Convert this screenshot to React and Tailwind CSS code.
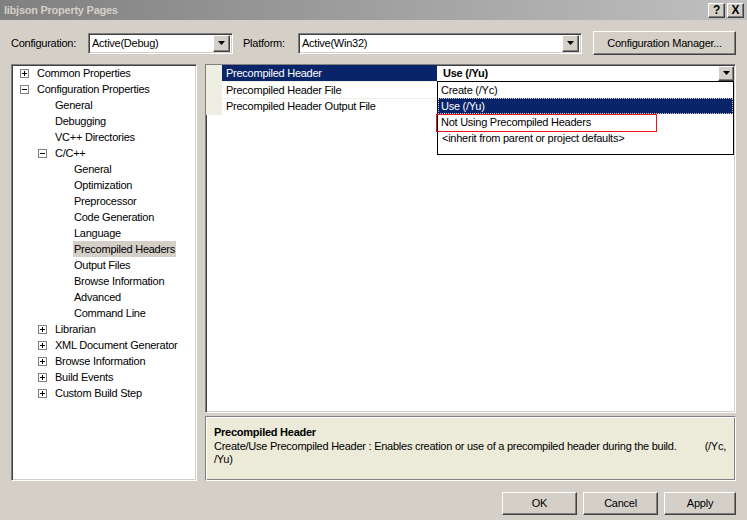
import React from 'react';

const treeItems = [
  { label: 'Common Properties', level: 0, box: 'plus' },
  { label: 'Configuration Properties', level: 0, box: 'minus' },
  { label: 'General', level: 1 },
  { label: 'Debugging', level: 1 },
  { label: 'VC++ Directories', level: 1 },
  { label: 'C/C++', level: 1, box: 'minus' },
  { label: 'General', level: 2 },
  { label: 'Optimization', level: 2 },
  { label: 'Preprocessor', level: 2 },
  { label: 'Code Generation', level: 2 },
  { label: 'Language', level: 2 },
  { label: 'Precompiled Headers', level: 2, selected: true },
  { label: 'Output Files', level: 2 },
  { label: 'Browse Information', level: 2 },
  { label: 'Advanced', level: 2 },
  { label: 'Command Line', level: 2 },
  { label: 'Librarian', level: 1, box: 'plus' },
  { label: 'XML Document Generator', level: 1, box: 'plus' },
  { label: 'Browse Information', level: 1, box: 'plus' },
  { label: 'Build Events', level: 1, box: 'plus' },
  { label: 'Custom Build Step', level: 1, box: 'plus' },
];

const indent = ['pl-[8px]', 'pl-[26px]', 'pl-[45px]'];

const raised =
  'border border-t-white border-l-white border-b-[#404040] border-r-[#404040] shadow-[inset_-1px_-1px_0_#808080,inset_1px_1px_0_#d4d0c8] bg-[#d4d0c8]';
const sunken =
  'border border-t-[#808080] border-l-[#808080] border-b-white border-r-white shadow-[inset_1px_1px_0_#404040,inset_-1px_-1px_0_#d4d0c8]';

const ExpandBox = ({ type }) => (
  <svg width="9" height="9" viewBox="0 0 9 9" className="block">
    <rect x="0.5" y="0.5" width="8" height="8" fill="#fff" stroke="#808080" />
    <line x1="2" y1="4.5" x2="7" y2="4.5" stroke="#000" />
    {type === 'plus' && <line x1="4.5" y1="2" x2="4.5" y2="7" stroke="#000" />}
  </svg>
);

const Arrow = () => (
  <svg width="7" height="4" viewBox="0 0 7 4" className="block">
    <path d="M0 0h7L3.5 4z" fill="#000" />
  </svg>
);

const Combo = ({ value, className }) => (
  <div className={`${sunken} ${className} h-[21px] bg-white flex items-center`}>
    <span className="flex-1 pl-[3px] text-black">{value}</span>
    <div className={`${raised} w-[17px] h-[17px] mr-[2px] flex items-center justify-center`}>
      <Arrow />
    </div>
  </div>
);

const Button = ({ children, className }) => (
  <div className={`${raised} ${className} flex items-center justify-center text-black`}>{children}</div>
);

export default function App() {
  return (
    <div className="w-[747px] h-[520px] bg-[#d4d0c8] flex flex-col overflow-hidden font-['Liberation_Sans',Arial,sans-serif] text-[11px] tracking-[-0.25px] text-black select-none">
      {/* Title bar */}
      <div className="h-[20px] bg-gradient-to-r from-[#808080] to-[#c0c0c0] flex items-center pl-[4px] pr-[3px]">
        <span className="flex-1 font-bold text-[#d4d0c8]">libjson Property Pages</span>
        <Button className="w-[17px] h-[15px] font-bold text-[12px]">?</Button>
        <Button className="w-[17px] h-[15px] ml-[2px] font-bold text-[12px]">X</Button>
      </div>

      {/* Configuration row */}
      <div className="mt-[11px] h-[24px] flex items-center px-[11px]">
        <span className="w-[77px]">Configuration:</span>
        <Combo value="Active(Debug)" className="w-[145px]" />
        <span className="ml-[10px] w-[55px]">Platform:</span>
        <Combo value="Active(Win32)" className="w-[284px]" />
        <Button className="ml-[11px] w-[143px] h-[24px]">Configuration Manager...</Button>
      </div>

      {/* Main area */}
      <div className="mt-[9px] h-[417px] flex px-[11px] gap-[8px]">
        {/* Tree */}
        <div className={`${sunken} w-[186px] bg-white`}>
          {treeItems.map((it, i) => (
            <div key={i} className={`h-[16px] flex items-center ${indent[it.level]}`}>
              <div className="w-[16px] flex items-center">{it.box && <ExpandBox type={it.box} />}</div>
              <span className={`px-[1px] leading-[16px] whitespace-nowrap ${it.selected ? 'bg-[#d4d0c8]' : ''}`}>
                {it.label}
              </span>
            </div>
          ))}
        </div>

        {/* Right side */}
        <div className="flex-1 flex flex-col gap-[3px]">
          <div className={`${sunken} h-[350px] bg-white relative`}>
            <div className="flex flex-col">
              <div className="flex h-[16px]">
                <div className="w-[16px] bg-[#efeee3]" />
                <div className="w-[215px] bg-[#0a246a] text-white pl-[4px] leading-[16px]">Precompiled Header</div>
                <div className="flex-1 flex items-center pl-[6px]">
                  <span className="flex-1 font-bold">Use (/Yu)</span>
                  <div className={`${raised} w-[16px] h-[15px] mr-[1px] flex items-center justify-center`}>
                    <Arrow />
                  </div>
                </div>
              </div>
              <div className="flex h-[17px] border-t border-[#efeee3]">
                <div className="w-[16px] bg-[#efeee3]" />
                <div className="w-[215px] pl-[4px] leading-[16px]">Precompiled Header File</div>
                <div className="flex-1" />
              </div>
              <div className="flex h-[16px] border-t border-[#efeee3]">
                <div className="w-[16px] bg-[#efeee3]" />
                <div className="w-[215px] pl-[4px] leading-[15px]">Precompiled Header Output File</div>
                <div className="flex-1" />
              </div>
              <div className="h-[1px] w-[16px] bg-[#efeee3]" />
            </div>

            {/* Dropdown list */}
            <div className="absolute left-[231px] top-[16px] w-[297px] h-[74px] bg-white border border-black flex flex-col">
              <div className="h-[16px] pl-[3px] leading-[16px]">Create (/Yc)</div>
              <div className="h-[16px] pl-[2px] leading-[14px] bg-[#0a246a] text-white border border-dotted border-[#d4d0c8]">Use (/Yu)</div>
              <div className="h-[16px] pl-[3px] leading-[16px]">Not Using Precompiled Headers</div>
              <div className="h-[16px] pl-[4px] leading-[16px]">&lt;inherit from parent or project defaults&gt;</div>
            </div>
            {/* Annotation */}
            <div className="absolute left-[230px] top-[49px] w-[221px] h-[18px] border border-[#e8161b]" />
          </div>

          {/* Description */}
          <div className="h-[65px] bg-[#ecead9] border border-t-[#808080] border-l-[#808080] border-b-white border-r-white shadow-[inset_1px_1px_0_#ffffff,inset_-1px_-1px_0_#808080] px-[8px] pt-[8px]">
            <div className="font-bold leading-[14px]">Precompiled Header</div>
            <div className="flex justify-between leading-[14px] pr-[1px]">
              <span>Create/Use Precompiled Header : Enables creation or use of a precompiled header during the build.</span>
              <span>(/Yc,</span>
            </div>
            <div className="leading-[13px]">/Yu)</div>
          </div>
        </div>
      </div>

      {/* Bottom buttons */}
      <div className="mt-[11px] flex justify-end gap-[6px] pr-[11px]">
        <Button className="w-[75px] h-[23px]">OK</Button>
        <Button className="w-[75px] h-[23px]">Cancel</Button>
        <Button className="w-[72px] h-[23px]">Apply</Button>
      </div>
    </div>
  );
}
